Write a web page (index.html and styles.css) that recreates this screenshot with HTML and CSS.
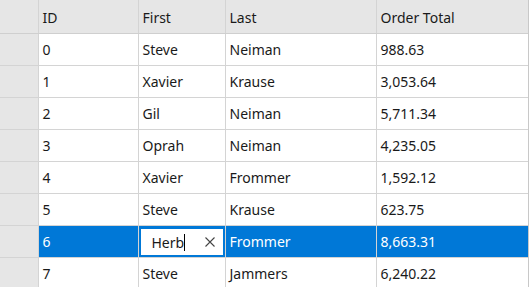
FILE: index.html
```html
<!DOCTYPE html>
<html lang="en">
<head>
  <meta charset="UTF-8" />
  <title>Orders Grid</title>
  <link rel="stylesheet" href="styles.css">
</head>
<body>
  <div class="grid">
    <table>
      <colgroup>
        <col class="c-rh"><col class="c-id"><col class="c-first"><col class="c-last"><col class="c-total">
      </colgroup>
      <thead>
        <tr><th class="rh"></th><th>ID</th><th>First</th><th>Last</th><th>Order Total</th></tr>
      </thead>
      <tbody>
        <tr><td class="rh"></td><td>0</td><td>Steve</td><td>Neiman</td><td>988.63</td></tr>
        <tr><td class="rh"></td><td>1</td><td>Xavier</td><td>Krause</td><td>3,053.64</td></tr>
        <tr><td class="rh"></td><td>2</td><td>Gil</td><td>Neiman</td><td>5,711.34</td></tr>
        <tr><td class="rh"></td><td>3</td><td>Oprah</td><td>Neiman</td><td>4,235.05</td></tr>
        <tr><td class="rh"></td><td>4</td><td>Xavier</td><td>Frommer</td><td>1,592.12</td></tr>
        <tr><td class="rh"></td><td>5</td><td>Steve</td><td>Krause</td><td>623.75</td></tr>
        <tr class="selected">
          <td class="rh"></td><td>6</td>
          <td class="editing">
            <div class="editor">
              <span class="value">Herb</span><span class="caret"></span>
              <svg class="clear" width="10" height="10" viewBox="0 0 10 10"><path d="M0.5 0.5 L9.5 9.5 M9.5 0.5 L0.5 9.5" stroke="#444" stroke-width="1.1" fill="none"/></svg>
            </div>
          </td>
          <td>Frommer</td><td>8,663.31</td>
        </tr>
        <tr><td class="rh"></td><td>7</td><td>Steve</td><td>Jammers</td><td>6,240.22</td></tr>
      </tbody>
    </table>
  </div>
</body>
</html>
```

FILE: styles.css
```css
body {
  margin: 0;
  font-family: "Noto Sans", "Open Sans", sans-serif;
  font-size: 14px;
  color: #1a1a1a;
  background: #fff;
}

.grid {
  width: 529px;
  height: 287px;
  overflow: hidden;
  border-right: 1px solid #c8c8c8;
  box-sizing: border-box;
}

table {
  border-collapse: collapse;
  table-layout: fixed;
  width: 528px;
}

.c-rh { width: 38px; }
.c-id { width: 100px; }
.c-first { width: 87px; }
.c-last { width: 151px; }
.c-total { width: 152px; }

th, td {
  height: 31px;
  padding: 0 0 0 4px;
  border: 1px solid #d4d4d4;
  text-align: left;
  font-weight: normal;
  white-space: nowrap;
  overflow: hidden;
}

thead th {
  background: #e6e6e6;
  height: 32px;
  padding-top: 1px;
  border-top: none;
  border-bottom-color: #cfcfcf;
}

th:first-child, td:first-child {
  border-left: none;
}

.rh {
  background: #e6e6e6;
  padding: 0;
}

tr.selected td {
  background: #0078d7;
  color: #fff;
}

tr.selected td.rh {
  background: #e6e6e6;
}

tr.selected td.editing {
  padding: 0;
  background: #0078d7;
}

.editor {
  display: flex;
  align-items: center;
  height: 26px;
  margin: 1px 0 0 0;
  background: #fff;
  border: 2px solid #0078d7;
  color: #1a1a1a;
  padding-left: 11px;
  padding-right: 8px;
}

.caret {
  width: 1px;
  height: 17px;
  background: #000;
}

.clear {
  margin-left: auto;
}
```
